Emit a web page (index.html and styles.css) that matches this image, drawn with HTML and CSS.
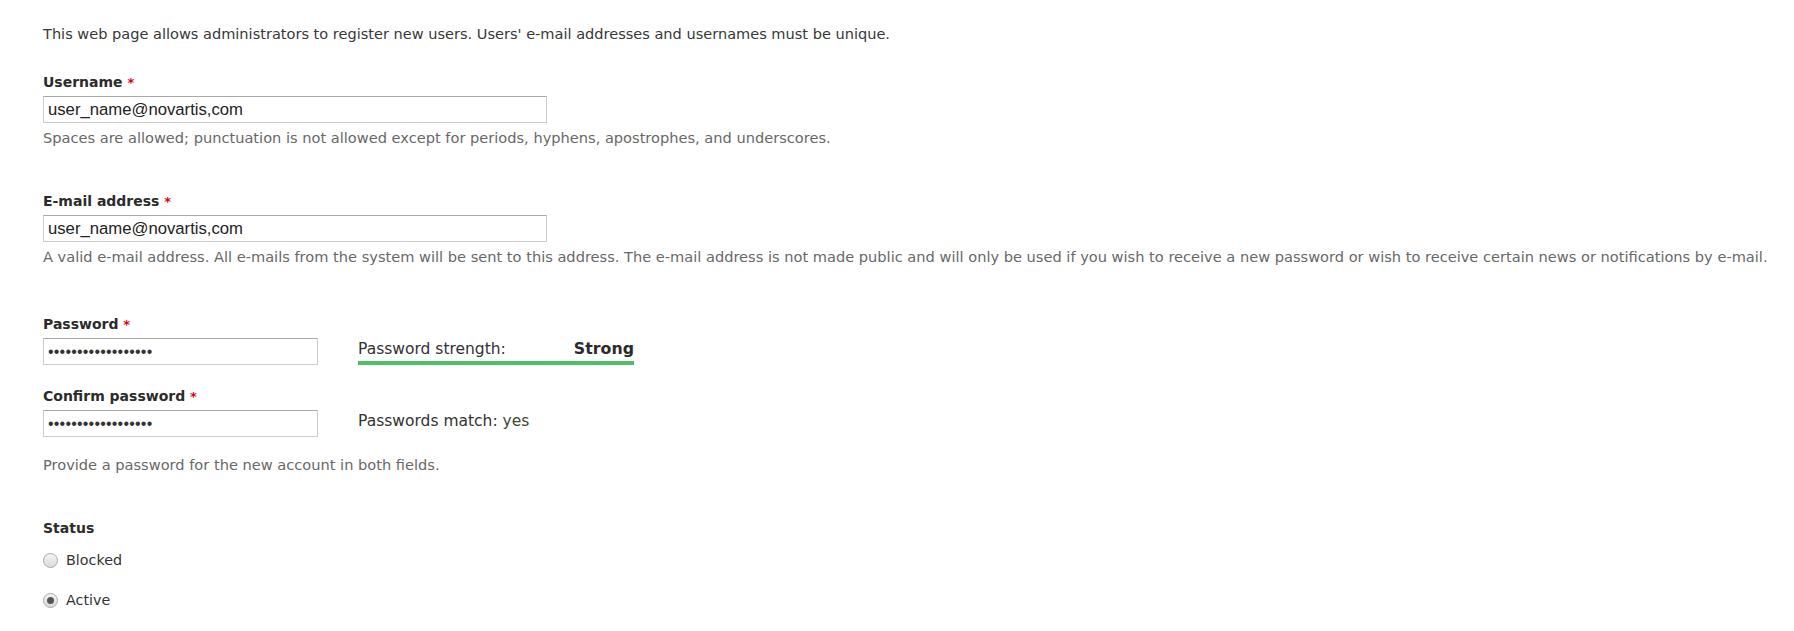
FILE: index.html
```html
<!DOCTYPE html>
<html lang="en">
<head>
<meta charset="utf-8">
<title>Add user</title>
<link rel="stylesheet" href="styles.css">
</head>
<body>
<form class="page">
  <p class="intro">This web page allows administrators to register new users. Users' e-mail addresses and usernames must be unique.</p>

  <div class="item item-first">
    <label class="label" for="name">Username <span class="req">*</span></label>
    <input class="text wide" id="name" type="text" value="user_name@novartis,com">
    <div class="desc">Spaces are allowed; punctuation is not allowed except for periods, hyphens, apostrophes, and underscores.</div>
  </div>

  <div class="item item-mail">
    <label class="label" for="mail">E-mail address <span class="req">*</span></label>
    <input class="text wide" id="mail" type="text" value="user_name@novartis,com">
    <div class="desc">A valid e-mail address. All e-mails from the system will be sent to this address. The e-mail address is not made public and will only be used if you wish to receive a new password or wish to receive certain news or notifications by e-mail.</div>
  </div>

  <div class="item item-pass">
    <div class="pw-row">
      <div class="pw-col">
        <label class="label" for="pass1">Password <span class="req">*</span></label>
        <input class="text narrow" id="pass1" type="password" value="aaaaaaaaaaaaaaaaaa">
      </div>
      <div class="strength">
        <div class="strength-text"><span>Password strength:</span><strong>Strong</strong></div>
        <div class="strength-bar"></div>
      </div>
    </div>
    <div class="pw-row pw-row-confirm">
      <div class="pw-col">
        <label class="label" for="pass2">Confirm password <span class="req">*</span></label>
        <input class="text narrow" id="pass2" type="password" value="aaaaaaaaaaaaaaaaaa">
      </div>
      <div class="match">Passwords match: <span class="ok">yes</span></div>
    </div>
    <div class="desc desc-pass">Provide a password for the new account in both fields.</div>
  </div>

  <fieldset class="status">
    <legend class="label">Status</legend>
    <label class="radio radio-first"><input type="radio" name="status"> <span>Blocked</span></label>
    <label class="radio radio-second"><input type="radio" name="status" checked> <span>Active</span></label>
  </fieldset>
</form>
</body>
</html>
```

FILE: styles.css
```css
html, body {
  margin: 0;
  padding: 0;
  background: #ffffff;
}

body {
  font-family: "DejaVu Sans", "Liberation Sans", sans-serif;
  font-size: 14.6px;
  line-height: 20px;
  color: #333333;
}

.page {
  padding: 24px 0 0 43px;
  margin: 0;
}

.intro {
  margin: 0;
  font-size: 14.55px;
  color: #383838;
}

.item {
  display: flex;
  flex-direction: column;
  align-items: flex-start;
}

.item-first { margin-top: 28px; }
.item-mail { margin-top: 43px; }
.item-pass { margin-top: 47px; }

.label {
  display: block;
  font-weight: bold;
  font-size: 14px;
  line-height: 20px;
  color: #2b2b2b;
  margin: 0 0 3px 0;
  padding: 0;
}

.req {
  color: #e0001b;
  font-size: 13px;
}

.text {
  box-sizing: border-box;
  height: 27px;
  margin: 0;
  padding: 0 4px;
  font-family: "Liberation Sans", Arial, sans-serif;
  font-size: 16.7px;
  color: #222222;
  background: #ffffff;
  border: 1px solid #cccccc;
  border-top-color: #a8a8a8;
  border-radius: 0;
  outline: none;
}

.wide { width: 504px; }
.narrow { width: 275px; font-size: 16px; letter-spacing: 0.2px; color: #333333; }

.desc {
  margin-top: 5px;
  font-size: 14.6px;
  color: #686868;
  white-space: nowrap;
}

.pw-row {
  display: flex;
  align-items: flex-end;
  gap: 40px;
}

.pw-row-confirm { margin-top: 21px; }

.pw-col {
  display: flex;
  flex-direction: column;
}

.strength {
  width: 276px;
  display: flex;
  flex-direction: column;
}

.strength-text {
  display: flex;
  justify-content: space-between;
  font-size: 15.5px;
  color: #333333;
}

.strength-text strong {
  font-weight: bold;
  font-size: 15.8px;
  color: #2b2b2b;
}

.strength-bar {
  margin-top: 2px;
  height: 4px;
  background: #4cc064;
}

.match {
  margin-bottom: 6px;
  font-size: 15.5px;
  color: #333333;
}

.ok { color: #3c4a2e; }

.desc-pass { margin-top: 18px; }

.status {
  border: 0;
  margin: 43px 0 0 0;
  padding: 0;
  min-width: 0;
}

.status legend {
  padding: 0;
  margin: 0;
}

.radio {
  display: flex;
  align-items: center;
  gap: 8px;
  font-size: 14.3px;
  color: #333333;
  line-height: 20px;
}

.radio-first { margin-top: 12px; }
.radio-second { margin-top: 20px; }

.radio input {
  appearance: none;
  -webkit-appearance: none;
  box-sizing: border-box;
  width: 15px;
  height: 15px;
  margin: 0;
  border-radius: 50%;
  border: 1px solid #a9a9a9;
  background: linear-gradient(#f3f3f3, #dcdcdc);
  display: inline-grid;
  place-items: center;
}

.radio input:checked::after {
  content: "";
  width: 7px;
  height: 7px;
  border-radius: 50%;
  background: #555555;
}
```
